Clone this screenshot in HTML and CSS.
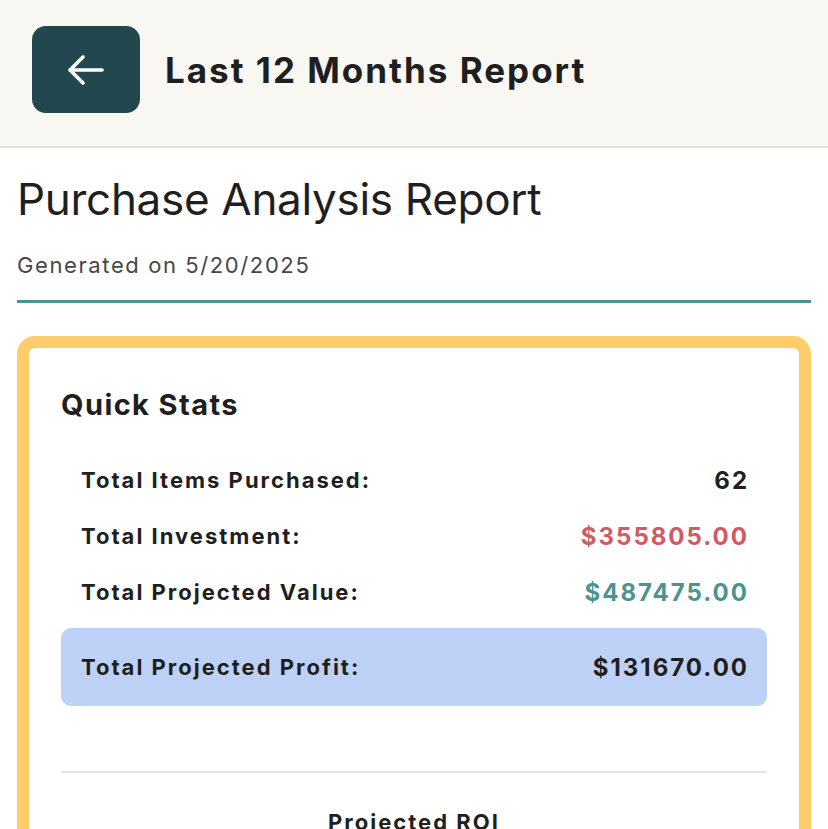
FILE: index.html
```html
<!DOCTYPE html>
<html>
<head>
<meta charset="utf-8">
<link rel="stylesheet" href="styles.css">
</head>
<body>
<header class="topbar">
  <button class="back" aria-label="Back">
    <svg width="40" height="32" viewBox="0 0 40 32" fill="none" stroke="#ffffff" stroke-width="3.6" stroke-linecap="round" stroke-linejoin="round">
      <path d="M36 16H4"/>
      <path d="M17 3L4 16L17 29"/>
    </svg>
  </button>
  <h1 class="top-title">Last 12 Months Report</h1>
</header>
<main class="content">
  <section class="report-head">
    <h2 class="report-title">Purchase Analysis Report</h2>
    <p class="generated">Generated on 5/20/2025</p>
  </section>
  <section class="card">
    <h3 class="card-title">Quick Stats</h3>
    <div class="stats">
      <div class="row"><span class="label">Total Items Purchased:</span><span class="val">62</span></div>
      <div class="row"><span class="label">Total Investment:</span><span class="val red">$355805.00</span></div>
      <div class="row"><span class="label">Total Projected Value:</span><span class="val teal">$487475.00</span></div>
      <div class="row profit"><span class="label">Total Projected Profit:</span><span class="val">$131670.00</span></div>
    </div>
    <hr class="divider">
    <div class="roi">
      <div class="roi-label">Projected ROI</div>
    </div>
  </section>
</main>
</body>
</html>
```

FILE: styles.css
```css
* { box-sizing: border-box; }
html, body { margin: 0; padding: 0; }
body {
  font-family: Inter, "Noto Sans", sans-serif;
  color: #1f1f1f;
  background: #ffffff;
  width: 828px;
  overflow: hidden;
}
.topbar {
  display: flex;
  align-items: center;
  gap: 25px;
  height: 148px;
  padding: 26px 32px 33px;
  background: #f8f7f2;
  border-bottom: 2px solid #e4e4e2;
}
.back {
  width: 108px;
  height: 87px;
  border: none;
  border-radius: 14px;
  background: #22474f;
  display: flex;
  align-items: center;
  justify-content: center;
  padding: 0;
  flex-shrink: 0;
}
.top-title {
  margin: 0;
  font-size: 35px;
  font-weight: 700;
  letter-spacing: 2px;
  color: #1f1f1f;
}
.content {
  padding: 0 17px;
}
.report-head {
  border-bottom: 3px solid #4a9191;
  padding-top: 24px;
  padding-bottom: 21px;
}
.report-title {
  margin: 0;
  font-size: 44px;
  font-weight: 400;
  line-height: 54px;
  letter-spacing: -0.3px;
  color: #1f1f1f;
}
.generated {
  margin: 25px 0 0;
  font-size: 22px;
  line-height: 28px;
  letter-spacing: 1.6px;
  color: #474747;
}
.card {
  margin-top: 33px;
  border: 12px solid #ffcd69;
  border-radius: 18px;
  padding: 40px 32px 0;
  height: 600px;
}
.card-title {
  margin: 0;
  font-size: 29px;
  font-weight: 700;
  line-height: 34px;
  letter-spacing: 1.4px;
  color: #1f1f1f;
}
.stats {
  margin-top: 30px;
  display: flex;
  flex-direction: column;
}
.row {
  display: flex;
  justify-content: space-between;
  align-items: center;
  height: 56px;
  padding: 0 20px;
  font-size: 22px;
  font-weight: 700;
  letter-spacing: 2px;
}
.label { color: #1f1f1f; }
.val { color: #1f1f1f; font-size: 24px; margin-right: -2px; }
.red { color: #d05a66; }
.teal { color: #4a9591; }
.row.profit {
  margin-top: 8px;
  height: 78px;
  background: #bed1f7;
  border-radius: 10px;
}
.divider {
  margin: 65px 0 0;
  border: none;
  border-top: 2px solid #e5e5e5;
}
.roi {
  text-align: center;
  padding-top: 36px;
}
.roi-label {
  font-size: 22px;
  font-weight: 700;
  letter-spacing: 2px;
  color: #1f1f1f;
}
```
